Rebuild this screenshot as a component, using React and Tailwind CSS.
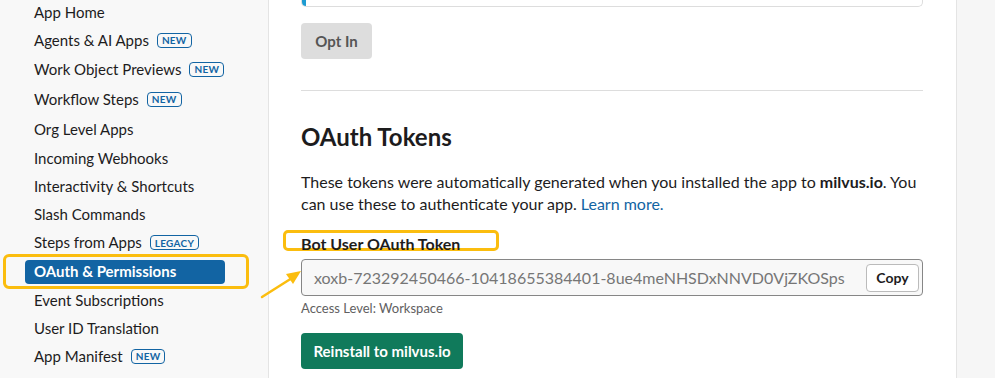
import React from "react";

const navItems = [
  { label: "App Home", h: "h-[28px]" },
  { label: "Agents & AI Apps", badge: "NEW", h: "h-[28px]" },
  { label: "Work Object Previews", badge: "NEW", h: "h-[30px]" },
  { label: "Workflow Steps", badge: "NEW", h: "h-[30px]" },
  { label: "Org Level Apps", h: "h-[30px]" },
  { label: "Incoming Webhooks", h: "h-[28px]" },
  { label: "Interactivity & Shortcuts", h: "h-[28px]" },
  { label: "Slash Commands", h: "h-[28px]" },
  { label: "Steps from Apps", badge: "LEGACY", h: "h-[29px]" },
  { label: "OAuth & Permissions", active: true, h: "h-[29px]" },
  { label: "Event Subscriptions", h: "h-[28px]" },
  { label: "User ID Translation", h: "h-[28px]" },
  { label: "App Manifest", badge: "NEW", h: "h-[28px]" },
];

const Badge = ({ text }) => (
  <span className="ml-[8px] inline-flex h-[15px] items-center rounded-[4px] border border-[#1264a3] px-[4px] text-[10px] font-bold leading-none tracking-wide text-[#1264a3]">
    {text}
  </span>
);

const Sidebar = () => (
  <aside className="w-[269px] shrink-0 border-r border-[#e4e4e4] bg-[#f8f8f8]">
    <nav className="-mt-[2px] flex flex-col px-[25px]">
      {navItems.map((item) =>
        item.active ? (
          <div key={item.label} className={`relative flex items-center ${item.h}`}>
            <div className="flex h-[24px] w-[200px] items-center rounded-[4px] bg-[#1264a3] pl-[9px] text-[15px] font-bold text-white">
              {item.label}
            </div>
            <div className="absolute -left-[22px] top-[-3px] h-[35px] w-[246px] rounded-[6px] border-[3px] border-[#fbbd0e]" />
          </div>
        ) : (
          <div
            key={item.label}
            className={`flex items-center pl-[9px] text-[15px] text-[#1d1c1d] ${item.h}`}
          >
            {item.label}
            {item.badge && <Badge text={item.badge} />}
          </div>
        )
      )}
    </nav>
  </aside>
);

const Arrow = () => (
  <svg
    className="pointer-events-none absolute left-[258px] top-[264px]"
    width="50"
    height="40"
    viewBox="0 0 50 40"
  >
    <line x1="4" y1="33" x2="34" y2="14" stroke="#fbbd0e" strokeWidth="2.5" strokeLinecap="round" />
    <polygon points="43,7 28,10 35,20" fill="#fbbd0e" />
  </svg>
);

const MainPanel = () => (
  <main className="w-[687px] shrink-0 bg-white px-[32px]">
    <div className="w-[622px]">
      {/* card scrolled off the top */}
      <div className="flex h-[7px] overflow-hidden rounded-b-[5px] border border-t-0 border-[#dddddd]">
        <div className="w-[4px] bg-[#1d9bd1]" />
      </div>

      <button className="mt-[16px] h-[36px] w-[71px] rounded-[4px] bg-[#dddddd] text-[15px] font-bold text-[#555555]">
        Opt In
      </button>

      <div className="mt-[31px] border-t border-[#dddddd]" />

      <h2 className="mt-[31px] text-[24px] font-bold leading-[30px] text-[#1d1c1d]">
        OAuth Tokens
      </h2>

      <p className="mt-[19px] text-[16px] leading-[22px] text-[#1d1c1d]">
        These tokens were automatically generated when you installed the app to{" "}
        <span className="font-bold">milvus.io</span>. You can use these to authenticate your app.{" "}
        <span className="text-[#1264a3]">Learn more.</span>
      </p>

      <div className="relative mt-[17px] h-[22px]">
        <div className="absolute -left-[18px] top-[-2px] h-[21px] w-[216px] rounded-[5px] border-[3px] border-[#fbbd0e]" />
        <span className="relative text-[16px] font-bold leading-[20px] text-[#1d1c1d]">
          Bot User OAuth Token
        </span>
      </div>

      <div className="mt-[5px] flex h-[37px] items-center justify-between rounded-[4px] border border-[#868686] bg-[#f8f8f8] pl-[12px] pr-[3px]">
        <span className="text-[16px] text-[#767676]">
          xoxb-723292450466-10418655384401-8ue4meNHSDxNNVD0VjZKOSps
        </span>
        <button className="h-[28px] w-[53px] rounded-[4px] border border-[#bbbbbb] bg-white text-[14px] font-bold text-[#1d1c1d]">
          Copy
        </button>
      </div>

      <div className="mt-[3px] text-[13px] leading-[18px] text-[#616061]">
        Access Level: Workspace
      </div>

      <button className="mt-[16px] h-[36px] w-[162px] rounded-[4px] bg-[#107a5b] text-[15px] font-bold text-white">
        Reinstall to milvus.io
      </button>
    </div>
  </main>
);

export default function App() {
  return (
    <div
      className="relative flex h-[378px] w-[995px] overflow-hidden bg-white"
      style={{ fontFamily: "Lato, 'Noto Sans', sans-serif" }}
    >
      <Sidebar />
      <MainPanel />
      <div className="flex-1 border-l border-[#e4e4e4] bg-[#f6f6f6]" />
      <Arrow />
    </div>
  );
}
